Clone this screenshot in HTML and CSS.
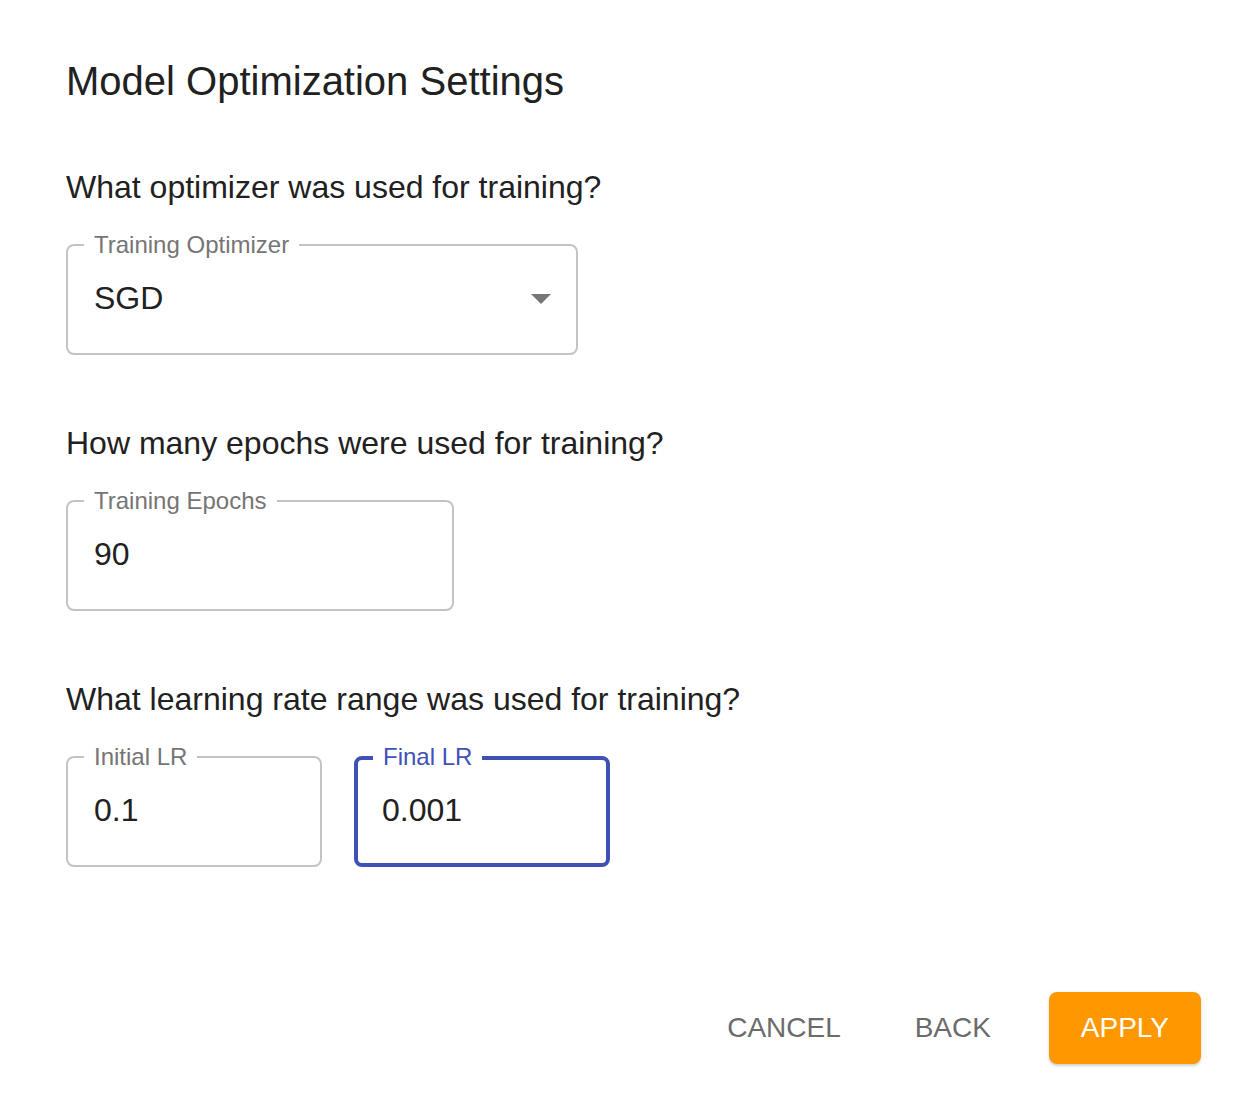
FILE: index.html
```html
<!DOCTYPE html>
<html lang="en">
<head>
<meta charset="utf-8">
<title>Model Optimization Settings</title>
<link rel="stylesheet" href="styles.css">
</head>
<body>
<div class="dialog">
  <h2 class="title">Model Optimization Settings</h2>

  <p class="question q-first">What optimizer was used for training?</p>
  <div class="field field-select">
    <span class="label">Training Optimizer</span>
    <span class="value">SGD</span>
    <svg class="arrow" width="20" height="10" viewBox="0 0 20 10"><path d="M0 0 L10 10 L20 0 Z" fill="#757575"/></svg>
  </div>

  <p class="question">How many epochs were used for training?</p>
  <div class="field field-epochs">
    <span class="label">Training Epochs</span>
    <span class="value">90</span>
  </div>

  <p class="question">What learning rate range was used for training?</p>
  <div class="row">
    <div class="field field-lr">
      <span class="label">Initial LR</span>
      <span class="value">0.1</span>
    </div>
    <div class="field field-lr focused">
      <span class="label">Final LR</span>
      <span class="value">0.001</span>
    </div>
  </div>

  <div class="actions">
    <button class="btn btn-text btn-cancel">CANCEL</button>
    <button class="btn btn-text btn-back">BACK</button>
    <button class="btn btn-contained">APPLY</button>
  </div>
</div>
</body>
</html>
```

FILE: styles.css
```css
html, body {
  margin: 0;
  padding: 0;
  background: #ffffff;
}

body {
  font-family: "Liberation Sans", Arial, Helvetica, sans-serif;
  color: #212121;
  width: 1242px;
  height: 1096px;
  overflow: hidden;
}

.dialog {
  padding: 57px 41px 0 66px;
}

.title {
  margin: 0;
  font-size: 40px;
  line-height: 48px;
  font-weight: 400;
  color: #212121;
}

.question {
  margin: 68px 0 37px 0;
  font-size: 32px;
  line-height: 40px;
  color: #212121;
}

.question.q-first {
  margin-top: 62px;
}

.field {
  position: relative;
  box-sizing: border-box;
  height: 111px;
  border: 2px solid #c4c4c4;
  border-radius: 8px;
  display: flex;
  align-items: center;
  padding: 0 24px 3px 26px;
}

.field-select { width: 512px; }
.field-epochs { width: 388px; }
.field-lr { width: 256px; }

.label {
  position: absolute;
  top: -15px;
  left: 16px;
  padding: 0 10px;
  background: #ffffff;
  font-size: 24px;
  line-height: 28px;
  color: #757575;
  white-space: nowrap;
}

.value {
  font-size: 32px;
  line-height: 40px;
  color: #212121;
  flex: 1;
}

.arrow {
  flex: none;
  margin-right: 1px;
  margin-top: 2px;
}

.row {
  display: flex;
  gap: 32px;
}

.field.focused {
  border: 4px solid #3f51b5;
  padding-left: 24px;
}

.field.focused .label {
  color: #3f51b5;
  top: -17px;
  left: 15px;
}

.actions {
  display: flex;
  justify-content: flex-end;
  align-items: center;
  gap: 32px;
  margin-top: 125px;
}

.btn {
  font-family: "Liberation Sans", Arial, Helvetica, sans-serif;
  font-size: 28px;
  line-height: 48px;
  height: 72px;
  border: none;
  border-radius: 8px;
  background: transparent;
  cursor: pointer;
  padding: 12px 16px;
  min-width: 128px;
}

.btn-text {
  color: #6b6b6b;
}

.btn-contained {
  background: #ff9800;
  color: #ffffff;
  padding: 12px 32px;
  min-width: 151px;
  box-shadow: 0 2px 2px rgba(0, 0, 0, 0.12), 0 1px 5px rgba(0, 0, 0, 0.08);
}
```
